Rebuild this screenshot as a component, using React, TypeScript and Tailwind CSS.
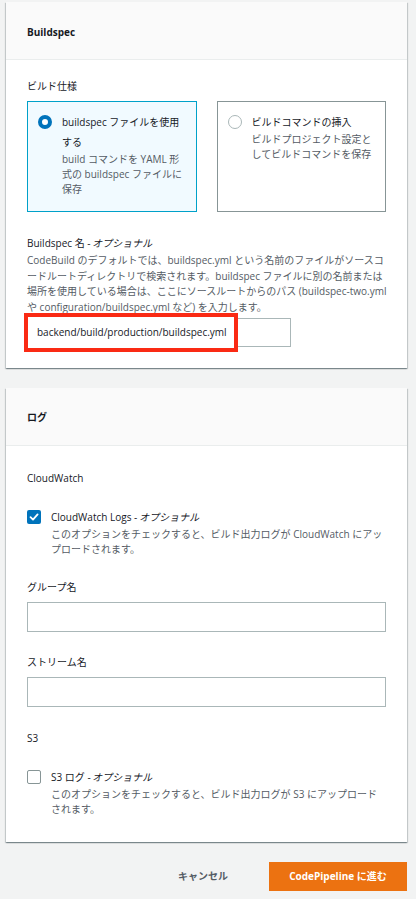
import React from "react";

const font = { fontFamily: '"Open Sans", "Noto Sans CJK JP", sans-serif' };

function Italic({ children }: { children: React.ReactNode }) {
  return <span className="inline-block font-normal -skew-x-12">{children}</span>;
}

function Panel({ title, children, headerPt }: { title: string; children: React.ReactNode; headerPt: string }) {
  return (
    <div className="bg-white w-[401px] shadow-[0_1px_1px_0_rgba(0,28,36,0.3),1px_1px_1px_0_rgba(0,28,36,0.15),-1px_1px_1px_0_rgba(0,28,36,0.15)]">
      <div className={`h-[58px] bg-[#fafafa] border-b border-[#eaeded] px-[21px] flex items-center ${headerPt}`}>
        <span className="text-[10px] font-bold text-[#16191f]">{title}</span>
      </div>
      {children}
    </div>
  );
}

function Checkbox({ checked }: { checked: boolean }) {
  if (checked) {
    return (
      <div className="w-[14px] h-[14px] rounded-[2px] bg-[#0073bb] flex items-center justify-center shrink-0 mt-[1px]">
        <svg width="10" height="10" viewBox="0 0 10 10">
          <path d="M1.5 5.2 L4 7.6 L8.6 2.4" stroke="white" strokeWidth="1.8" fill="none" strokeLinecap="round" strokeLinejoin="round" />
        </svg>
      </div>
    );
  }
  return <div className="w-[14px] h-[14px] rounded-[2px] border border-[#879596] bg-white shrink-0 mt-[1px]" />;
}

export default function App() {
  return (
    <div style={font} className="w-[416px] min-h-[899px] bg-[#f2f3f3] pt-[2px] pl-[6px] text-[10px] text-[#16191f]">
      <Panel title="Buildspec" headerPt="pt-[3px]">
        <div className="px-[21px] pt-[18px] pb-[21px]">
          <div className="leading-[16px]">ビルド仕様</div>
          <div className="grid grid-cols-2 gap-[20px] mt-[7px]">
            <div className="border border-[#00a1c9] bg-[#f1faff] pt-[10px] pl-[10px] pr-[8px] pb-[14px] flex">
              <div className="w-[14px] h-[14px] rounded-full border-[4px] border-[#0073bb] bg-white shrink-0 mt-[3px]" />
              <div className="ml-[10px]">
                <div className="leading-[20px] whitespace-nowrap">
                  buildspec ファイルを使用
                  <br />
                  する
                </div>
                <div className="leading-[15px] text-[#545b64] whitespace-nowrap">
                  build コマンドを YAML 形
                  <br />
                  式の buildspec ファイルに
                  <br />
                  保存
                </div>
              </div>
            </div>
            <div className="border border-[#879596] bg-white pt-[10px] pl-[10px] pr-[8px] pb-[14px] flex">
              <div className="w-[14px] h-[14px] rounded-full border-[1.5px] border-[#aab7b8] bg-white shrink-0 mt-[3px]" />
              <div className="ml-[10px]">
                <div className="leading-[20px] whitespace-nowrap">ビルドコマンドの挿入</div>
                <div className="leading-[15px] text-[#545b64] whitespace-nowrap">
                  ビルドプロジェクト設定と
                  <br />
                  してビルドコマンドを保存
                </div>
              </div>
            </div>
          </div>
          <div className="mt-[23px] leading-[16px]">
            Buildspec 名 - <Italic>オプショナル</Italic>
          </div>
          <div className="mt-[2px] leading-[15.5px] text-[#545b64] whitespace-nowrap">
            CodeBuild のデフォルトでは、buildspec.yml という名前のファイルがソースコ
            <br />
            ードルートディレクトリで検索されます。buildspec ファイルに別の名前または
            <br />
            場所を使用している場合は、ここにソースルートからのパス (buildspec-two.yml
            <br />
            や configuration/buildspec.yml など) を入力します。
          </div>
          <div className="relative mt-[3px] w-[264px] h-[29px] border border-[#aab7b8] bg-white flex items-center pl-[9px]">
            <div className="absolute left-[-4px] top-[-6px] w-[214px] h-[39px] border-[4px] border-[#fa2a14] bg-white" />
            <span className="relative">backend/build/production/buildspec.yml</span>
          </div>
        </div>
      </Panel>

      <div className="mt-[20px]">
        <Panel title="ログ" headerPt="pt-[2px]">
          <div className="px-[21px] pt-[24px] pb-[25px]">
            <div className="leading-[16px]">CloudWatch</div>
            <div className="mt-[23px] flex">
              <Checkbox checked />
              <div className="ml-[10px]">
                <div className="leading-[16px]">
                  CloudWatch Logs - <Italic>オプショナル</Italic>
                </div>
                <div className="mt-[2px] leading-[15px] text-[#545b64] whitespace-nowrap">
                  このオプションをチェックすると、ビルド出力ログが CloudWatch にアッ
                  <br />
                  プロードされます。
                </div>
              </div>
            </div>
            <div className="mt-[22px] leading-[16px]">グループ名</div>
            <div className="mt-[7px] h-[30px] border border-[#aab7b8] bg-white" />
            <div className="mt-[22px] leading-[16px]">ストリーム名</div>
            <div className="mt-[7px] h-[30px] border border-[#aab7b8] bg-white" />
            <div className="mt-[23px] leading-[16px]">S3</div>
            <div className="mt-[23px] flex">
              <Checkbox checked={false} />
              <div className="ml-[10px]">
                <div className="leading-[16px]">
                  S3 ログ - <Italic>オプショナル</Italic>
                </div>
                <div className="mt-[2px] leading-[15px] text-[#545b64] whitespace-nowrap">
                  このオプションをチェックすると、ビルド出力ログが S3 にアップロード
                  <br />
                  されます。
                </div>
              </div>
            </div>
          </div>
        </Panel>
      </div>

      <div className="w-[401px] mt-[20px] flex justify-end items-center gap-[21px]">
        <button className="px-[20px] h-[29px] font-bold text-[#545b64] text-[10px]">キャンセル</button>
        <button className="w-[138px] h-[29px] bg-[#ec7211] text-white font-bold text-[10px]">CodePipeline に進む</button>
      </div>
    </div>
  );
}
